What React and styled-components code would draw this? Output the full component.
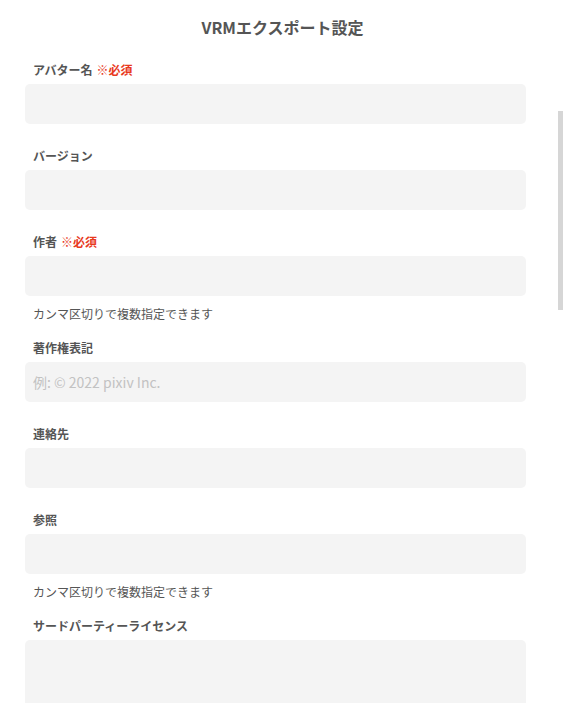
import styled, { createGlobalStyle } from "styled-components";

const GlobalStyle = createGlobalStyle`
  html, body {
    margin: 0;
    padding: 0;
    background: #fff;
    overflow: hidden;
  }

  body {
    font-family: "Noto Sans CJK JP", "Noto Sans", sans-serif;
    color: #555;
  }
`;

const Page = styled.div`
  display: flex;
  flex-direction: column;
  width: 565px;
  height: 703px;
  overflow: hidden;
`;

const Header = styled.h1`
  margin: 15px 0 23px;
  font-size: 16px;
  line-height: 24px;
  font-weight: 700;
  text-align: center;
  color: #555;
`;

const Form = styled.form`
  display: flex;
  flex-direction: column;
  padding: 0 39px 0 25px;
`;

const Field = styled.div`
  display: flex;
  flex-direction: column;
  margin-bottom: ${(p) => (p.$hint ? "18px" : "24px")};
`;

const Label = styled.label`
  padding-left: 8px;
  margin-bottom: 6px;
  font-size: 12px;
  line-height: 16px;
  font-weight: 700;
  color: #555;
`;

const Required = styled.span`
  margin-left: 4px;
  color: #e8391d;
`;

const Input = styled.input`
  box-sizing: border-box;
  width: 100%;
  height: 40px;
  padding: 0 8px;
  border: none;
  border-radius: 5px;
  background: #f4f4f4;
  font-family: inherit;
  font-size: 14px;
  color: #555;
  outline: none;

  &::placeholder {
    color: #c2c2c2;
  }
`;

const TextArea = styled.textarea`
  box-sizing: border-box;
  width: 100%;
  height: 120px;
  padding: 8px;
  border: none;
  border-radius: 5px;
  background: #f4f4f4;
  font-family: inherit;
  font-size: 14px;
  resize: none;
  outline: none;
`;

const Hint = styled.p`
  margin: 10px 0 0;
  padding-left: 8px;
  font-size: 12px;
  line-height: 16px;
  color: #555;
`;

const ScrollThumb = styled.div`
  position: fixed;
  top: 111px;
  right: 2px;
  width: 5px;
  height: 199px;
  background: #d6d6d6;
`;

const fields = [
  { label: "アバター名", required: true },
  { label: "バージョン" },
  { label: "作者", required: true, hint: "カンマ区切りで複数指定できます" },
  { label: "著作権表記", placeholder: "例: © 2022 pixiv Inc." },
  { label: "連絡先" },
  { label: "参照", hint: "カンマ区切りで複数指定できます" },
];

const App = () => {
  return (
    <>
      <GlobalStyle />
      <Page>
        <Header>VRMエクスポート設定</Header>

        <Form>
          {fields.map((f) => (
            <Field key={f.label} $hint={!!f.hint}>
              <Label>
                {f.label}
                {f.required && <Required>※必須</Required>}
              </Label>
              <Input placeholder={f.placeholder} />
              {f.hint && <Hint>{f.hint}</Hint>}
            </Field>
          ))}

          <Field>
            <Label>サードパーティーライセンス</Label>
            <TextArea />
          </Field>
        </Form>
      </Page>
      <ScrollThumb />
    </>
  );
};

export default App;
